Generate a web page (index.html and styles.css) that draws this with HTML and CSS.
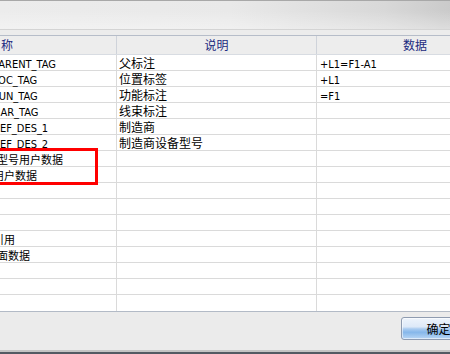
FILE: index.html
```html
<!DOCTYPE html>
<html>
<head>
<meta charset="utf-8">
<link rel="stylesheet" href="styles.css">
</head>
<body>
<div class="win">
  <div class="top"></div>
  <div class="band"></div>
  <div class="table">
    <div class="head">
      <div class="c c1"><span class="sh-h">名称</span></div>
      <div class="c c2 ctr">说明</div>
      <div class="c c3 ctr">数据</div>
    </div>
    <div class="row">
      <div class="c c1"><span class="lat sh-l">PARENT_TAG</span></div>
      <div class="c c2">父标注</div>
      <div class="c c3"><span class="lat">+L1=F1-A1</span></div>
    </div>
    <div class="row">
      <div class="c c1"><span class="lat sh-l">LOC_TAG</span></div>
      <div class="c c2">位置标签</div>
      <div class="c c3"><span class="lat">+L1</span></div>
    </div>
    <div class="row">
      <div class="c c1"><span class="lat sh-l">FUN_TAG</span></div>
      <div class="c c2">功能标注</div>
      <div class="c c3"><span class="lat">=F1</span></div>
    </div>
    <div class="row">
      <div class="c c1"><span class="lat sh-l">HAR_TAG</span></div>
      <div class="c c2">线束标注</div>
      <div class="c c3"></div>
    </div>
    <div class="row">
      <div class="c c1"><span class="lat sh-l">REF_DES_1</span></div>
      <div class="c c2">制造商</div>
      <div class="c c3"></div>
    </div>
    <div class="row">
      <div class="c c1"><span class="lat sh-l">REF_DES_2</span></div>
      <div class="c c2">制造商设备型号</div>
      <div class="c c3"></div>
    </div>
    <div class="row">
      <div class="c c1"><span class="zh sh-a">型号用户数据</span></div>
      <div class="c c2"></div>
      <div class="c c3"></div>
    </div>
    <div class="row">
      <div class="c c1"><span class="zh sh-b">用户数据</span></div>
      <div class="c c2"></div>
      <div class="c c3"></div>
    </div>
    <div class="row"><div class="c c1"></div><div class="c c2"></div><div class="c c3"></div></div>
    <div class="row"><div class="c c1"></div><div class="c c2"></div><div class="c c3"></div></div>
    <div class="row"><div class="c c1"></div><div class="c c2"></div><div class="c c3"></div></div>
    <div class="row">
      <div class="c c1"><span class="zh sh-b">引用</span></div>
      <div class="c c2"></div>
      <div class="c c3"></div>
    </div>
    <div class="row">
      <div class="c c1"><span class="zh sh-a">面数据</span></div>
      <div class="c c2"></div>
      <div class="c c3"></div>
    </div>
    <div class="row"><div class="c c1"></div><div class="c c2"></div><div class="c c3"></div></div>
    <div class="row"><div class="c c1"></div><div class="c c2"></div><div class="c c3"></div></div>
    <div class="row last"><div class="c c1"></div><div class="c c2"></div><div class="c c3"></div></div>
  </div>
  <div class="foot"><button class="btn">确定</button></div>
  <div class="edge"></div>
  <div class="mark"></div>
</div>
</body>
</html>
```

FILE: styles.css
```css
html, body {
  margin: 0;
  padding: 0;
  width: 450px;
  height: 354px;
  overflow: hidden;
  background: #ebebeb;
}

.win {
  position: relative;
  width: 513px;
  font-family: "Noto Sans CJK SC", "DejaVu Sans", sans-serif;
  font-size: 12px;
  color: #000;
}

.top {
  height: 28px;
  border-top: 1px solid #a8a8a8;
  border-bottom: 1px solid #d4d4d4;
  background:
    linear-gradient(to bottom, rgba(255,255,255,0) 35%, rgba(255,255,255,0.35) 100%),
    linear-gradient(to right, #ececec 0%, #e9e9e9 45%, #d8d8d8 75%, #bdbdbd 100%);
}

.band {
  height: 5px;
  background: #ececec;
}

.table {
  background: #fff;
  border-bottom: 1px solid #b2bac6;
}

.head {
  display: flex;
  height: 18px;
  border-top: 1px solid #b6bdc9;
  border-bottom: 1px solid #d8dce2;
  background: #ededed;
  color: #1c2a80;
}

.head .c {
  line-height: 18px;
  border-right: 1px solid #cfd3da;
}

.row {
  display: flex;
  height: 15px;
  border-bottom: 1px solid #dadada;
}

.row.last {
  height: 16px;
  border-bottom: none;
}

.c {
  box-sizing: border-box;
  overflow: visible;
  white-space: nowrap;
  line-height: 15px;
  border-right: 1px solid #dadada;
}

.c1 { width: 117px; }
.c2 { width: 200px; padding-left: 2px; }
.c3 { flex: 1; padding-left: 3px; border-right: none; }
.head .c3 { border-right: none; }

.ctr {
  text-align: center;
  padding-left: 0;
}

.lat {
  font-family: "DejaVu Sans Condensed", "DejaVu Sans", sans-serif;
  font-stretch: condensed;
  font-size: 11px;
}

.zh {
  font-size: 11px;
}

.sh-l, .sh-h, .sh-a, .sh-b {
  display: inline-block;
}
.sh-l { margin-left: -7px; }
.sh-h { margin-left: -11px; }
.sh-a { margin-left: -3px; }
.sh-b { margin-left: -7px; }

.foot {
  height: 38px;
  display: flex;
  justify-content: flex-end;
  align-items: flex-start;
  padding-right: 37px;
  background: #ebebeb;
}

.btn {
  margin: 5px 0 0 0;
  width: 75px;
  height: 23px;
  padding: 0;
  border: 1px solid #8e9bb0;
  border-radius: 3px;
  box-shadow: inset 0 0 0 1px rgba(255,255,255,0.55);
  background: linear-gradient(to bottom, #eef4fc 0%, #dde9f8 42%, #a9cbf0 52%, #86b7ea 68%, #b8d6f5 100%);
  font-family: "Noto Sans CJK SC", sans-serif;
  font-size: 12px;
  line-height: 21px;
  color: #000;
}

.edge {
  height: 2px;
  border-top: 2px solid #c4c4c4;
  background: #535a63;
}

.mark {
  position: absolute;
  left: -10px;
  top: 148px;
  width: 108px;
  height: 37px;
  box-sizing: border-box;
  border: 3px solid #ff0000;
}
```
